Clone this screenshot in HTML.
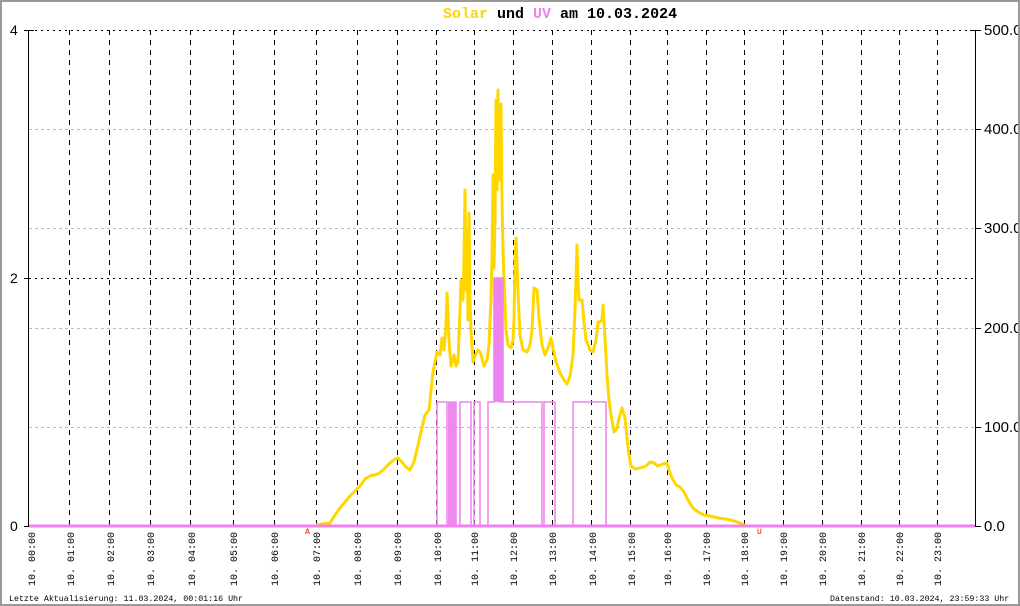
<!DOCTYPE html>
<html><head><meta charset="utf-8"><style>
html,body{margin:0;padding:0;background:#fff}
svg{display:block}
text{font-family:"Liberation Mono",monospace}
</style></head><body>
<svg width="1020" height="606" viewBox="0 0 1020 606" xmlns="http://www.w3.org/2000/svg">
<rect x="0" y="0" width="1020" height="606" fill="#fff"/>
<!-- minor grid -->
<g stroke="#bbb" stroke-width="1" stroke-dasharray="3,3">
<line x1="29" y1="129.5" x2="975" y2="129.5"/>
<line x1="29" y1="228.5" x2="975" y2="228.5"/>
<line x1="29" y1="328.5" x2="975" y2="328.5"/>
<line x1="29" y1="427.5" x2="975" y2="427.5"/>
</g>
<g stroke="#000" stroke-width="1" stroke-dasharray="2,4">
<line x1="29" y1="30.5" x2="975" y2="30.5"/>
<line x1="29" y1="278.5" x2="975" y2="278.5"/>
</g>
<g stroke="#000" stroke-width="1" stroke-dasharray="5,5">
<line x1="69.5" y1="30" x2="69.5" y2="526"/><line x1="109.5" y1="30" x2="109.5" y2="526"/><line x1="150.5" y1="30" x2="150.5" y2="526"/><line x1="190.5" y1="30" x2="190.5" y2="526"/><line x1="233.5" y1="30" x2="233.5" y2="526"/><line x1="274.5" y1="30" x2="274.5" y2="526"/><line x1="316.5" y1="30" x2="316.5" y2="526"/><line x1="357.5" y1="30" x2="357.5" y2="526"/><line x1="397.5" y1="30" x2="397.5" y2="526"/><line x1="436.5" y1="30" x2="436.5" y2="526"/><line x1="474.5" y1="30" x2="474.5" y2="526"/><line x1="513.5" y1="30" x2="513.5" y2="526"/><line x1="552.5" y1="30" x2="552.5" y2="526"/><line x1="591.5" y1="30" x2="591.5" y2="526"/><line x1="630.5" y1="30" x2="630.5" y2="526"/><line x1="667.5" y1="30" x2="667.5" y2="526"/><line x1="706.5" y1="30" x2="706.5" y2="526"/><line x1="744.5" y1="30" x2="744.5" y2="526"/><line x1="783.5" y1="30" x2="783.5" y2="526"/><line x1="822.5" y1="30" x2="822.5" y2="526"/><line x1="861.5" y1="30" x2="861.5" y2="526"/><line x1="899.5" y1="30" x2="899.5" y2="526"/><line x1="937.5" y1="30" x2="937.5" y2="526"/>
</g>
<text x="443" y="18" font-size="15" font-weight="bold"><tspan fill="#ffd700">Solar</tspan><tspan fill="#000"> und </tspan><tspan fill="#ee82ee">UV</tspan><tspan fill="#000"> am 10.03.2024</tspan></text>
<!-- axes -->
<g stroke="#000" stroke-width="1">
<line x1="28.5" y1="30" x2="28.5" y2="526"/>
<line x1="975.5" y1="30" x2="975.5" y2="526"/>
<line x1="24" y1="30.5" x2="34" y2="30.5"/><line x1="24" y1="278.5" x2="29" y2="278.5"/><line x1="24" y1="526.5" x2="29" y2="526.5"/>
<line x1="970" y1="30.5" x2="981" y2="30.5"/><line x1="975" y1="129.5" x2="981" y2="129.5"/><line x1="975" y1="228.5" x2="981" y2="228.5"/><line x1="975" y1="328.5" x2="981" y2="328.5"/><line x1="975" y1="427.5" x2="981" y2="427.5"/><line x1="975" y1="526.5" x2="981" y2="526.5"/>
</g>
<g fill="#000">
<text x="10" y="35" font-size="14" style="font-family:'Liberation Sans',sans-serif">4</text>
<text x="10" y="283" font-size="14" style="font-family:'Liberation Sans',sans-serif">2</text>
<text x="10" y="531" font-size="14" style="font-family:'Liberation Sans',sans-serif">0</text>
<text x="984" y="35" font-size="15" style="font-family:'Liberation Sans',sans-serif">500.0</text>
<text x="984" y="134" font-size="15" style="font-family:'Liberation Sans',sans-serif">400.0</text>
<text x="984" y="233" font-size="15" style="font-family:'Liberation Sans',sans-serif">300.0</text>
<text x="984" y="333" font-size="15" style="font-family:'Liberation Sans',sans-serif">200.0</text>
<text x="984" y="432" font-size="15" style="font-family:'Liberation Sans',sans-serif">100.0</text>
<text x="984" y="531" font-size="15" style="font-family:'Liberation Sans',sans-serif">0.0</text>
</g>
<line x1="29" y1="525.5" x2="975" y2="525.5" stroke="#ffd700" stroke-width="2"/>
<!-- solar -->
<polyline fill="none" stroke="#ffd700" stroke-width="3" stroke-linejoin="round" points="316,525 322,524 330,523 335,515 340,508 345,502 350,496 355,491 360,486 365,479 370,476 378,474 383,470 390,463 395,459 398,458 402,462 406,467 410,470 414,462 418,445 421,432 425,415 429,410 433,372 437,352 440,355 442,338 444,350 446,325 447,293 449,340 451,366 454,355 456,366 458,362 460,310 461,280 463,300 464,260 465,190 466,290 467,230 468,320 469,213 470,300 471,330 473,362 475,356 478,350 480,352 482,358 484,366 487,360 489,345 491,300 492,260 493,175 494,268 495,220 496,100 497,190 498,90 499,180 500,130 501,104 502,200 503,250 504,278 506,330 508,345 511,348 513,340 514,320 515,260 516,238 517,262 518,292 520,335 523,350 527,352 530,345 532,330 534,288 537,290 539,318 542,345 545,355 548,348 551,338 553,348 556,362 560,373 564,380 567,384 570,376 573,355 575,310 577,245 578,280 579,300 582,300 584,322 586,340 590,350 593,352 596,340 598,322 600,322 602,320 603,305 605,338 607,375 609,400 611,415 614,432 617,428 619,418 622,408 625,418 627,438 629,455 631,466 635,469 640,468 646,466 650,462 654,463 658,466 663,464 667,463 669,470 672,478 676,485 680,487 684,492 688,500 693,508 698,512 704,515 710,516 718,518 726,519 734,521 740,523 746,526"/>
<!-- UV -->
<polyline fill="none" stroke="#ee82ee" stroke-width="1.5" points="29,526 437,526 437,402 447,402 447,526 449,526 449,402 450,402 450,526 452,526 452,402 453,402 453,526 455,526 455,402 456,402 456,526 460,526 460,402 471,402 471,526 474,526 474,402 480,402 480,526 488,526 488,402 494,402 494,278 500,278 500,402 501,402 501,278 503,278 503,402 542,402 542,526 544,526 544,402 555,402 555,526 573,526 573,402 606,402 606,526 975,526"/>
<rect x="494" y="278" width="6" height="124" fill="#ee82ee"/>
<rect x="499" y="278" width="4" height="124" fill="#ee82ee"/>
<rect x="448" y="402" width="8" height="124" fill="#ee82ee" opacity="0.7"/>
<line x1="29" y1="526" x2="975" y2="526" stroke="#ee82ee" stroke-width="3"/>
<text x="305" y="534" font-size="8" fill="#f00">A</text>
<text x="757" y="534" font-size="8" fill="#f00">U</text>
<!-- x labels -->
<g font-size="10" fill="#000" text-anchor="end">
<text transform="translate(35,532) rotate(-90)">10. 00:00</text>
<text transform="translate(74,532) rotate(-90)">10. 01:00</text>
<text transform="translate(114,532) rotate(-90)">10. 02:00</text>
<text transform="translate(154,532) rotate(-90)">10. 03:00</text>
<text transform="translate(195,532) rotate(-90)">10. 04:00</text>
<text transform="translate(237,532) rotate(-90)">10. 05:00</text>
<text transform="translate(278,532) rotate(-90)">10. 06:00</text>
<text transform="translate(320,532) rotate(-90)">10. 07:00</text>
<text transform="translate(361,532) rotate(-90)">10. 08:00</text>
<text transform="translate(401,532) rotate(-90)">10. 09:00</text>
<text transform="translate(441,532) rotate(-90)">10. 10:00</text>
<text transform="translate(478,532) rotate(-90)">10. 11:00</text>
<text transform="translate(517,532) rotate(-90)">10. 12:00</text>
<text transform="translate(556,532) rotate(-90)">10. 13:00</text>
<text transform="translate(596,532) rotate(-90)">10. 14:00</text>
<text transform="translate(635,532) rotate(-90)">10. 15:00</text>
<text transform="translate(671,532) rotate(-90)">10. 16:00</text>
<text transform="translate(710,532) rotate(-90)">10. 17:00</text>
<text transform="translate(748,532) rotate(-90)">10. 18:00</text>
<text transform="translate(787,532) rotate(-90)">10. 19:00</text>
<text transform="translate(826,532) rotate(-90)">10. 20:00</text>
<text transform="translate(865,532) rotate(-90)">10. 21:00</text>
<text transform="translate(903,532) rotate(-90)">10. 22:00</text>
<text transform="translate(941,532) rotate(-90)">10. 23:00</text>
</g>
<text x="9" y="601" font-size="8.3" fill="#000">Letzte Aktualisierung: 11.03.2024, 00:01:16 Uhr</text>
<text x="830" y="601" font-size="8.3" fill="#000">Datenstand: 10.03.2024, 23:59:33 Uhr</text>
<!-- border (drawn last to clip labels) -->
<rect x="1018" y="0" width="2" height="606" fill="#999"/>
<rect x="0" y="604" width="1020" height="2" fill="#999"/>
<rect x="0" y="0" width="1020" height="2" fill="#999"/>
<rect x="0" y="0" width="2" height="606" fill="#999"/>
</svg>
</body></html>
